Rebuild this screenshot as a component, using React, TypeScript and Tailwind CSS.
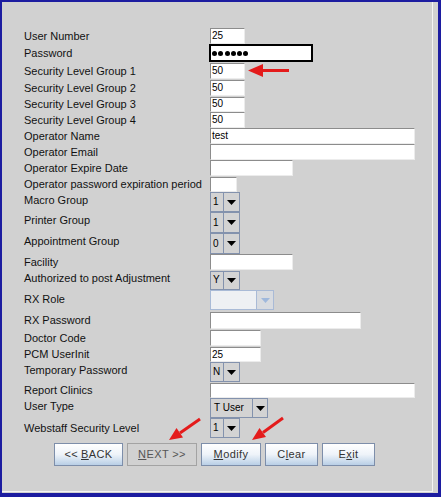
import React from "react";

const TF = ({ cls, v }: { cls: string; v?: string }) => (
  <div
    className={`${cls} bg-white border border-t-[#8c8c8c] border-l-[#8c8c8c] border-b-[#ececec] border-r-[#ececec] text-[10px] leading-none flex items-center pl-[1px] text-black`}
  >
    {v}
  </div>
);

const Tri = ({ color }: { color: string }) => (
  <svg width="9" height="5" viewBox="0 0 9 5">
    <polygon points="0,0 9,0 4.5,5" fill={color} />
  </svg>
);

const Combo = ({
  cls,
  textCls,
  v,
}: {
  cls: string;
  textCls: string;
  v: string;
}) => (
  <div className={`${cls} flex border border-[#8392ad] bg-[#d3d3d3]`}>
    <div className={`${textCls} border-r border-[#8392ad] text-[10px] leading-none flex items-center pl-[2px] text-black`}>
      {v}
    </div>
    <div className="flex-1 flex items-center justify-center">
      <Tri color="#000" />
    </div>
  </div>
);

const Row = ({
  rowCls,
  label,
  lblCls = "",
  children,
}: {
  rowCls: string;
  label: string;
  lblCls?: string;
  children: React.ReactNode;
}) => (
  <div className={`${rowCls} flex items-center`}>
    <div className={`w-[186px] shrink-0 text-[11px] leading-none text-[#111] whitespace-nowrap ${lblCls}`}>
      {label}
    </div>
    {children}
  </div>
);

const Btn = ({
  cls,
  children,
  disabled,
}: {
  cls: string;
  children: React.ReactNode;
  disabled?: boolean;
}) => (
  <div
    className={`${cls} h-[23px] flex items-center justify-center text-[11px] leading-none tracking-[0.4px] ${
      disabled
        ? "bg-[#d1d1d1] border border-[#a3a3a3] text-[#555]"
        : "bg-gradient-to-b from-[#ffffff] via-[#eef3f9] to-[#b9cfe6] border border-[#7d8eaa] text-[#333]"
    }`}
  >
    {children}
  </div>
);

export default function App() {
  return (
    <div className="relative w-[441px] h-[497px] bg-[#1c1ca0] pl-[2px] pt-[2px] pr-[3px] pb-[4px] font-['Liberation_Sans',Arial,sans-serif]">
      <div className="w-full h-full bg-[#d1d1d1] pr-[5px] pb-[1px]">
        <div className="w-full h-full border-r border-b border-[#f4f4f4] pl-[22px] pt-[26px]">
          <Row rowCls="h-[16px]" label="User Number">
            <TF cls="w-[35px] h-[16px]" v="25" />
          </Row>
          <Row rowCls="h-[19px] items-start" label="Password" lblCls="pt-[4px]">
            <div className="ml-[-1px] w-[104px] h-[18px] bg-white border-2 border-black flex items-center gap-[1.3px] pl-[1px]">
              {[0, 1, 2, 3, 4, 5].map((i) => (
                <div key={i} className="w-[5px] h-[5px] rounded-full bg-black" />
              ))}
            </div>
          </Row>
          <Row rowCls="h-[17px] items-start" label="Security Level Group 1" lblCls="pt-[3px]">
            <TF cls="w-[35px] h-[16px]" v="50" />
          </Row>
          <Row rowCls="h-[16px]" label="Security Level Group 2">
            <TF cls="w-[35px] h-[16px]" v="50" />
          </Row>
          <Row rowCls="h-[16px]" label="Security Level Group 3">
            <TF cls="w-[35px] h-[15px]" v="50" />
          </Row>
          <Row rowCls="h-[16px]" label="Security Level Group 4">
            <TF cls="w-[35px] h-[16px]" v="50" />
          </Row>
          <Row rowCls="h-[16px]" label="Operator Name">
            <TF cls="w-[205px] h-[16px]" v="test" />
          </Row>
          <Row rowCls="h-[16px]" label="Operator Email">
            <TF cls="w-[205px] h-[16px]" />
          </Row>
          <Row rowCls="h-[17px] items-start" label="Operator Expire Date" lblCls="pt-[3px]">
            <TF cls="w-[83px] h-[16px]" />
          </Row>
          <Row rowCls="h-[15px]" label="Operator password expiration period">
            <TF cls="w-[27px] h-[15px]" />
          </Row>
          <Row rowCls="h-[20px]" label="Macro Group" lblCls="pb-[3px]">
            <Combo cls="w-[30px] h-[20px]" textCls="w-[13px]" v="1" />
          </Row>
          <Row rowCls="h-[21px]" label="Printer Group" lblCls="pb-[5px]">
            <Combo cls="w-[30px] h-[21px]" textCls="w-[13px]" v="1" />
          </Row>
          <Row rowCls="h-[21px]" label="Appointment Group" lblCls="pb-[5px]">
            <Combo cls="w-[30px] h-[21px]" textCls="w-[13px]" v="0" />
          </Row>
          <Row rowCls="h-[16px]" label="Facility">
            <TF cls="w-[83px] h-[16px]" />
          </Row>
          <Row rowCls="h-[20px]" label="Authorized to post Adjustment" lblCls="pb-[4px]">
            <Combo cls="w-[30px] h-[19px]" textCls="w-[13px]" v="Y" />
          </Row>
          <Row rowCls="h-[22px] items-start" label="RX Role" lblCls="pt-[4px]">
            <div className="w-[64px] h-[20px] flex border border-[#a9bad6] bg-[#d8dbe0]">
              <div className="w-[46px] border-r border-[#a9bad6] bg-[#eef0f3]" />
              <div className="flex-1 flex items-center justify-center">
                <Tri color="#9fb8dc" />
              </div>
            </div>
          </Row>
          <Row rowCls="h-[18px] items-start" label="RX Password" lblCls="pt-[3px]">
            <TF cls="w-[151px] h-[17px]" />
          </Row>
          <Row rowCls="h-[17px] items-start" label="Doctor Code" lblCls="pt-[3px]">
            <TF cls="w-[51px] h-[16px]" />
          </Row>
          <Row rowCls="h-[15px]" label="PCM UserInit">
            <TF cls="w-[51px] h-[15px]" v="25" />
          </Row>
          <Row rowCls="h-[21px] items-start" label="Temporary Password" lblCls="pt-[3px]">
            <Combo cls="w-[30px] h-[20px]" textCls="w-[13px]" v="N" />
          </Row>
          <Row rowCls="h-[15px]" label="Report Clinics">
            <TF cls="w-[205px] h-[15px]" />
          </Row>
          <Row rowCls="h-[20px]" label="User Type" lblCls="pb-[4px]">
            <Combo cls="w-[58px] h-[20px]" textCls="w-[42px] pl-[3px]" v="T User" />
          </Row>
          <Row rowCls="h-[22px] items-start" label="Webstaff Security Level" lblCls="pt-[5px]">
            <Combo cls="w-[30px] h-[20px]" textCls="w-[13px]" v="1" />
          </Row>
          <div className="flex gap-[4px] mt-[3px] ml-[30px]">
            <Btn cls="w-[69px]">
              &lt;&lt; <span className="underline ml-[3px]">B</span>ACK
            </Btn>
            <Btn cls="w-[70px]" disabled>
              <span className="underline">N</span>EXT &gt;&gt;
            </Btn>
            <Btn cls="w-[60px]">
              <span className="underline">M</span>odify
            </Btn>
            <Btn cls="w-[53px]">
              C<span className="underline">l</span>ear
            </Btn>
            <Btn cls="w-[53px]">
              E<span className="underline">x</span>it
            </Btn>
          </div>
        </div>
      </div>
      <svg
        className="absolute left-0 top-0 pointer-events-none"
        width="441"
        height="497"
        viewBox="0 0 441 497"
      >
        <g fill="#e41b1b" stroke="#e41b1b">
          <line x1="289" y1="70.5" x2="258" y2="70.5" strokeWidth="3" />
          <polygon points="248,70.5 263,64 263,77" stroke="none" />
          <line x1="200" y1="419" x2="180" y2="433" strokeWidth="3" />
          <polygon points="169,440 183,437.5 176.5,428" stroke="none" />
          <line x1="283" y1="418" x2="263" y2="432.5" strokeWidth="3" />
          <polygon points="252,440 266,437 259.5,428" stroke="none" />
        </g>
      </svg>
    </div>
  );
}
